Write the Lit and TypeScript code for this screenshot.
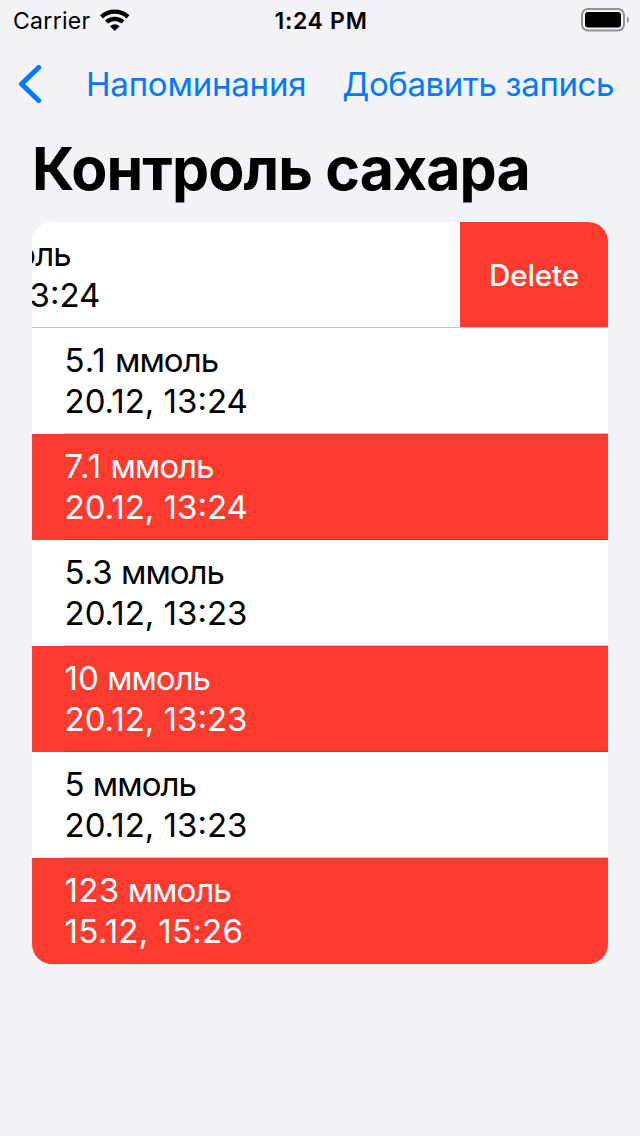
import { LitElement, html, css } from "lit";
import { customElement } from "lit/decorators.js";
import { classMap } from "lit/directives/class-map.js";

interface Entry { value: string; date: string; high: boolean }

const entries: Entry[] = [
  { value: "5.1", date: "20.12, 13:24", high: false },
  { value: "7.1", date: "20.12, 13:24", high: true },
  { value: "5.3", date: "20.12, 13:23", high: false },
  { value: "10", date: "20.12, 13:23", high: true },
  { value: "5", date: "20.12, 13:23", high: false },
  { value: "123", date: "15.12, 15:26", high: true },
];

@customElement("app-root")
export class AppRoot extends LitElement {
  static styles = css`
    :host { display: block; height: 1136px; background: #f2f2f7; color: #000; font-family: Inter, sans-serif; overflow: hidden; }
    * { box-sizing: border-box; }
    .status { display: grid; grid-template-columns: 1fr auto 1fr; height: 40px; align-items: center; padding: 0 11px 0 13px; font-size: 23px; }
    .carrier { display: flex; align-items: center; gap: 9px; letter-spacing: .3px; padding-top: 1px; }
    .wifi { margin-top: -1px; }
    .time { font-weight: 600; font-size: 23px; letter-spacing: .7px; padding-top: 1px; }
    .battery { justify-self: end; }
    svg { display: block; }
    .nav { display: flex; align-items: center; height: 88px; padding: 0 26px 0 18px; color: #007aff; font-size: 33px; white-space: nowrap; }
    .back { margin-right: 44px; }
    .reminders { letter-spacing: -.2px; }
    .add { margin-left: auto; letter-spacing: -.4px; }
    h1 { margin: 0; padding-left: 32px; height: 94px; line-height: 81px; font-size: 59px; font-weight: 700; letter-spacing: -.9px; white-space: nowrap; }
    .list { margin: 0 32px; border-radius: 20px; overflow: hidden; background: #fff; }
    .row { height: 106px; padding: 12px 0 0 32.5px; font-size: 33px; line-height: 41px; white-space: nowrap; background: linear-gradient(#c6c6c8, #c6c6c8) 32px 105px / 544px 1px no-repeat #fff; }
    .row.high { background: linear-gradient(#cb3832, #cb3832) 32px 105px / 544px 1px no-repeat #ff3b30; color: #fff; }
    .row.high:last-child { background: #ff3b30; }
    .unit { letter-spacing: -1px; }
    .decimal { letter-spacing: 1px; }
    .early { letter-spacing: .3px; }
    .swiped { display: flex; height: 106px; border-bottom: 1px solid #c6c6c8; }
    .content { flex: 1; overflow: hidden; padding-top: 12px; font-size: 33px; line-height: 41px; white-space: nowrap; }
    .shift { margin-left: -115px; }
    .delete { width: 148px; background: #ff3b30; color: #fff; display: flex; align-items: center; justify-content: center; padding-top: 1px; font-size: 29.5px; font-weight: 500; letter-spacing: -.1px; }
  `;

  render() {
    return html`
      <div class="status">
        <div class="carrier"><span>Carrier</span>
          <svg class="wifi" width="30" height="22" viewBox="0 0 30 22"><g fill="none" stroke="#000" stroke-width="4.300"><path d="M1.500 7.800A19.500 19.500 0 0 1 28 7.800M6.500 13A12.500 12.500 0 0 1 23 13"/></g><path d="M10 17.300Q14.750 13 19.500 17.300L14.750 22Z"/></svg>
        </div>
        <span class="time">1:24 PM</span>
        <svg class="battery" width="48" height="24" viewBox="0 0 48 24"><rect x="1" y="1" width="42" height="21.500" rx="6" fill="none" stroke="#929296" stroke-width="2"/><rect x="4" y="4" width="36" height="15.500" rx="3"/><path d="M46 8.500q2 .8 2 3.300t-2 3.300z" fill="#929296"/></svg>
      </div>
      <nav class="nav">
        <svg class="back" width="24" height="38" viewBox="0 0 24 38"><path d="M20.700 2.500L3.500 19L20.700 35.500" fill="none" stroke="#007aff" stroke-width="5" stroke-linecap="round" stroke-linejoin="round"/></svg>
        <span class="reminders">Напоминания</span><span class="add">Добавить запись</span>
      </nav>
      <h1>Контроль сахара</h1>
      <div class="list">
        <div class="swiped">
          <div class="content"><div class="shift"><span class="decimal">5.1</span><span class="unit"> ммоль</span><br>20.12, 13:24</div></div>
          <div class="delete">Delete</div>
        </div>
        ${entries.map((e) => html`<div class=${classMap({ row: true, high: e.high })}><span class=${classMap({ decimal: e.value.endsWith(".1"), early: e.value.length === 3 && !e.value.includes(".") })}>${e.value}</span><span class="unit"> ммоль</span><br><span class=${classMap({ early: e.date.startsWith("15") })}>${e.date}</span></div>`)}
      </div>`;
  }
}
